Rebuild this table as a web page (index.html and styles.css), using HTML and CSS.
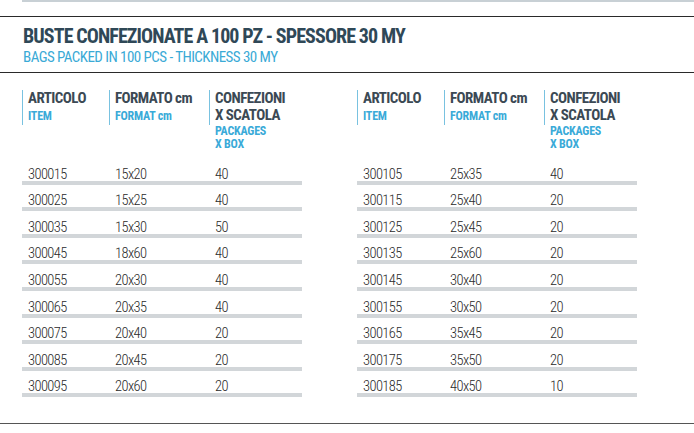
FILE: index.html
```html
<!DOCTYPE html>
<html lang="it">
<head>
<meta charset="utf-8">
<title>Buste confezionate</title>
<link rel="stylesheet" href="styles.css">
</head>
<body>
<div class="page">
  <div class="topband"></div>
  <div class="rule"></div>
  <header class="heading">
    <h1 class="title">BUSTE CONFEZIONATE A 100 PZ - SPESSORE 30 MY</h1>
    <p class="subtitle">BAGS PACKED IN 100 PCS - THICKNESS 30 MY</p>
  </header>
  <div class="rule"></div>
  <main class="tables">
    <section class="group">
      <div class="head">
        <div class="hcell"><div class="hmain">ARTICOLO</div><div class="hsub">ITEM</div></div>
        <div class="hcell"><div class="hmain">FORMATO cm</div><div class="hsub">FORMAT cm</div></div>
        <div class="hcell"><div class="hmain">CONFEZIONI<br>X SCATOLA</div><div class="hsub hsub-tight">PACKAGES<br>X BOX</div></div>
      </div>
      <div class="row"><span>300015</span><span>15x20</span><span>40</span></div>
      <div class="row"><span>300025</span><span>15x25</span><span>40</span></div>
      <div class="row"><span>300035</span><span>15x30</span><span>50</span></div>
      <div class="row"><span>300045</span><span>18x60</span><span>40</span></div>
      <div class="row"><span>300055</span><span>20x30</span><span>40</span></div>
      <div class="row"><span>300065</span><span>20x35</span><span>40</span></div>
      <div class="row"><span>300075</span><span>20x40</span><span>20</span></div>
      <div class="row"><span>300085</span><span>20x45</span><span>20</span></div>
      <div class="row"><span>300095</span><span>20x60</span><span>20</span></div>
    </section>
    <section class="group">
      <div class="head">
        <div class="hcell"><div class="hmain">ARTICOLO</div><div class="hsub">ITEM</div></div>
        <div class="hcell"><div class="hmain">FORMATO cm</div><div class="hsub">FORMAT cm</div></div>
        <div class="hcell"><div class="hmain">CONFEZIONI<br>X SCATOLA</div><div class="hsub hsub-tight">PACKAGES<br>X BOX</div></div>
      </div>
      <div class="row"><span>300105</span><span>25x35</span><span>40</span></div>
      <div class="row"><span>300115</span><span>25x40</span><span>20</span></div>
      <div class="row"><span>300125</span><span>25x45</span><span>20</span></div>
      <div class="row"><span>300135</span><span>25x60</span><span>20</span></div>
      <div class="row"><span>300145</span><span>30x40</span><span>20</span></div>
      <div class="row"><span>300155</span><span>30x50</span><span>20</span></div>
      <div class="row"><span>300165</span><span>35x45</span><span>20</span></div>
      <div class="row"><span>300175</span><span>35x50</span><span>20</span></div>
      <div class="row"><span>300185</span><span>40x50</span><span>10</span></div>
    </section>
  </main>
  <div class="rule rule-bottom"></div>
</div>
</body>
</html>
```
FILE: styles.css
```css
html, body {
  margin: 0;
  padding: 0;
  background: #ffffff;
}
.page {
  width: 694px;
  font-family: "Roboto Condensed", Roboto, "Liberation Sans", sans-serif;
  font-stretch: 75%;
}
.topband {
  height: 2px;
  margin-left: 22px;
  background: #c8d0d5;
}
.rule {
  height: 1px;
  background: #2a2a2a;
  margin-top: 14px;
}
.heading {
  padding: 7px 0 6px 23px;
}
.title {
  margin: 0;
  font-size: 20px;
  line-height: 24px;
  font-weight: 700;
  letter-spacing: -0.9px;
  color: #2f4857;
}
.subtitle {
  margin: 0;
  font-size: 15px;
  line-height: 18px;
  font-weight: 400;
  letter-spacing: -0.55px;
  color: #3aaad6;
}
.heading + .rule {
  margin-top: 0;
}
.tables {
  display: flex;
  gap: 55px;
  padding: 17px 0 0 22px;
}
.group {
  width: 280px;
}
.head {
  display: grid;
  grid-template-columns: 87px 100px 1fr;
  height: 68px;
}
.hcell {
  padding-left: 6px;
  background: linear-gradient(#79c2e0, #79c2e0) no-repeat left top / 1px 35px;
}
.hmain {
  font-size: 15px;
  line-height: 17px;
  font-weight: 700;
  letter-spacing: -0.55px;
  color: #3b4954;
}
.hsub {
  margin-top: 3px;
  font-size: 12px;
  line-height: 13.3px;
  font-weight: 700;
  letter-spacing: -0.2px;
  color: #3aaad8;
}
.hsub-tight {
  margin-top: 1px;
}
.row {
  display: grid;
  grid-template-columns: 87px 100px 1fr;
  align-items: end;
  height: 22.6px;
  border-bottom: 4px solid #d2d6d9;
  font-size: 14.5px;
  line-height: 12px;
  font-weight: 300;
  letter-spacing: -0.6px;
  color: #2a2a2a;
}
.row span {
  padding-left: 6px;
}
.rule-bottom {
  margin-top: 26px;
  background: #555555;
}
```
